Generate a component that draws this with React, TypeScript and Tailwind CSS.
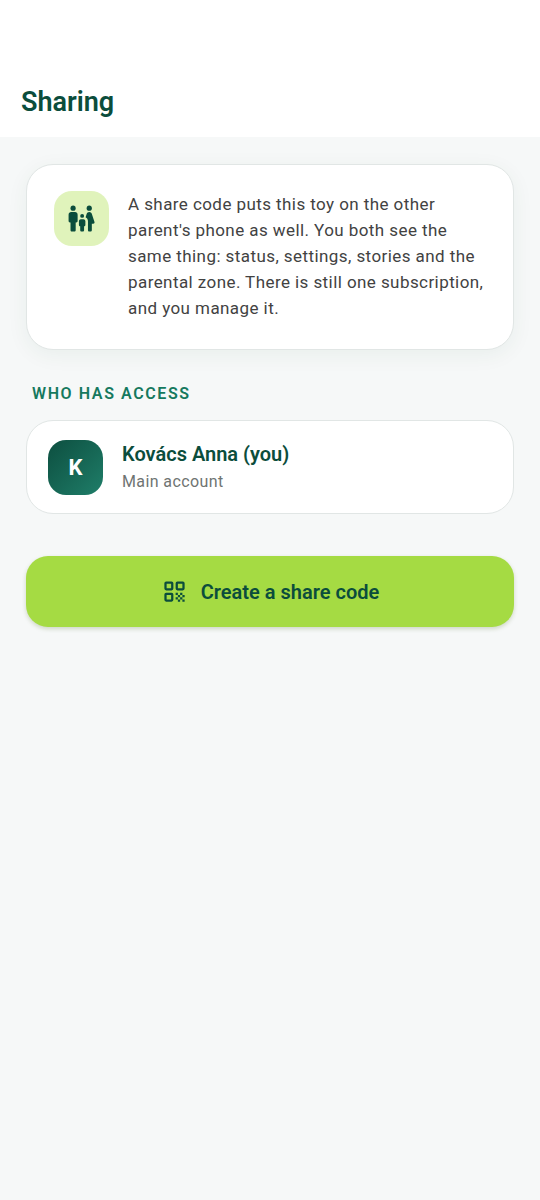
function FamilyIcon() {
  return (
    <svg viewBox="0 0 24 24" className="size-[31px]" fill="currentColor" aria-hidden="true">
      <circle cx="5.5" cy="4" r="2" />
      <circle cx="18" cy="4" r="2" />
      <circle cx="12.5" cy="10" r="1.5" />
      <path d="M4 7h3c1.1 0 2 .9 2 2v5c0 .55-.45 1-1 1h-.5v6c0 .55-.45 1-1 1h-2c-.55 0-1-.45-1-1v-6H3c-.55 0-1-.45-1-1V9c0-1.1.9-2 2-2z" />
      <path d="M11.5 12.5h2c.82 0 1.5.68 1.5 1.5v3c0 .55-.45 1-1 1v3c0 .55-.45 1-1 1h-1c-.55 0-1-.45-1-1v-3c-.55 0-1-.45-1-1v-3c0-.82.68-1.5 1.5-1.5z" />
      <path d="M17.94 7h.12c.86 0 1.62.55 1.9 1.37l2.1 6.31c.22.65-.26 1.32-.95 1.32H20v5c0 .55-.45 1-1 1h-1c-.55 0-1-.45-1-1v-7c0-1.32-.74-2.45-1.82-3.05l.86-2.58c.27-.82 1.04-1.37 1.9-1.37z" />
    </svg>
  );
}

function QrIcon() {
  return (
    <svg viewBox="0 0 24 24" className="size-[27px] shrink-0" fill="currentColor" aria-hidden="true">
      <g fill="none" stroke="currentColor" strokeWidth="2">
        <rect x="4" y="4" width="6" height="6" rx="0.6" />
        <rect x="14" y="4" width="6" height="6" rx="0.6" />
        <rect x="4" y="14" width="6" height="6" rx="0.6" />
      </g>
      <path d="M13 13h2v2h-2zM15 15h2v2h-2zM13 17h2v2h-2zM15 19h2v2h-2zM17 17h2v2h-2zM19 19h2v2h-2zM17 13h2v2h-2zM19 15h2v2h-2z" />
    </svg>
  );
}

export default function App() {
  return (
    <div className="min-h-screen bg-[#f6f8f8] font-['Roboto',sans-serif] text-[#0b4d3c]">
      <header className="bg-white px-[21px] pt-21 pb-[17px]">
        <h1 className="text-[27px] leading-9 font-semibold">Sharing</h1>
      </header>

      <main className="px-[26px] pt-[27px]">
        <section className="flex items-start gap-[19px] rounded-[27px] border border-[#e1e6e5] bg-white px-[27px] pt-[26px] pb-7 shadow-[0_5px_21px_rgba(6,78,59,0.06)]">
          <div className="flex size-[55px] shrink-0 items-center justify-center rounded-[18px] bg-[#e0f3bb]">
            <FamilyIcon />
          </div>
          <p className="text-[17px] leading-[26px] tracking-wide text-[#424242]">
            A share code puts this toy on the other parent's phone as well. You both see the same thing: status,
            settings, stories and the parental zone. There is still one subscription, and you manage it.
          </p>
        </section>

        <h2 className="mt-8 px-1.5 text-base leading-6 font-semibold tracking-widest text-[#15795e]">WHO HAS ACCESS</h2>

        <section className="mt-[14px] flex items-center gap-[19px] rounded-[27px] border border-[#e1e6e5] bg-white px-[21px] py-[18px]">
          <div className="flex size-[55px] shrink-0 items-center justify-center rounded-[18px] bg-linear-to-br from-[#0d4f40] to-[#1f7e69] text-[22px] font-bold text-white">
            K
          </div>
          <div>
            <h3 className="text-xl leading-[30px] font-semibold">Kovács Anna (you)</h3>
            <p className="text-base leading-[26px] tracking-wide text-[#6f7472]">Main account</p>
          </div>
        </section>

        <button
          type="button"
          className="mt-[42px] flex h-[71px] w-full items-center justify-center gap-[13px] rounded-[22px] bg-[#a5db43] text-xl font-semibold shadow-[0_2px_4px_rgba(70,100,20,0.22)]"
        >
          <QrIcon />
          Create a share code
        </button>
      </main>
    </div>
  );
}
